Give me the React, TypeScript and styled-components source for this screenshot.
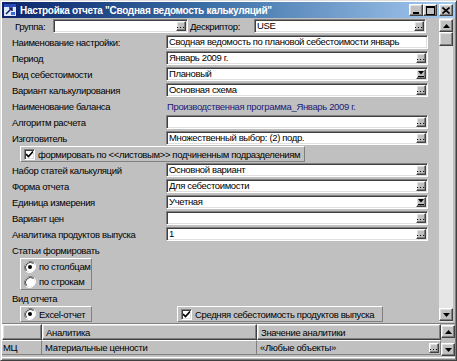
import React from "react";
import styled, { createGlobalStyle, css } from "styled-components";

const GlobalStyle = createGlobalStyle`
  html, body { margin: 0; padding: 0; background: #c0c0c0; }
  body { font-family: "Liberation Sans", Arial, sans-serif; font-size: 9.5px; letter-spacing: -0.35px; color: #000; }
  * { box-sizing: border-box; }
`;

const raised = css`
  border-top: 1px solid #ffffff;
  border-left: 1px solid #ffffff;
  border-right: 1px solid #404040;
  border-bottom: 1px solid #404040;
  box-shadow: inset -1px -1px 0 #808080, inset 1px 1px 0 #dfdfdf;
  background: #c0c0c0;
`;

const sunken = css`
  border-top: 1px solid #808080;
  border-left: 1px solid #808080;
  border-right: 1px solid #ffffff;
  border-bottom: 1px solid #ffffff;
  box-shadow: inset 1px 1px 0 #404040, inset -1px -1px 0 #dfdfdf;
`;

const Window = styled.div`
  width: 457px;
  height: 361px;
  background: #c0c0c0;
  border-top: 1px solid #dfdfdf;
  border-left: 1px solid #dfdfdf;
  border-right: 1px solid #404040;
  border-bottom: 1px solid #404040;
  box-shadow: inset 1px 1px 0 #ffffff, inset -1px -1px 0 #808080;
  padding: 1px;
  display: flex;
  flex-direction: column;
  overflow: hidden;
`;

const TitleBar = styled.div`
  height: 16px;
  flex: none;
  display: flex;
  align-items: center;
  padding-left: 1px;
  padding-right: 2px;
  background: linear-gradient(to right, #0a246a 0%, #3a6ea5 45%, #a6caf0 100%);
`;

const TitleText = styled.span`
  color: #ffffff;
  font-weight: bold;
  font-size: 10px;
  letter-spacing: -0.3px;
  margin-left: 3px;
  white-space: nowrap;
  flex: 1;
`;

const CaptionButton = styled.div<{ $gap?: number }>`
  ${raised};
  width: 14px;
  height: 12px;
  margin-left: ${(p) => p.$gap ?? 0}px;
  display: flex;
  align-items: center;
  justify-content: center;
`;

const Main = styled.div`
  height: 304px;
  flex: none;
  display: flex;
`;

const Content = styled.div`
  width: 437px;
  display: flex;
  flex-direction: column;
`;

const Row = styled.div<{ $indent?: number }>`
  height: 16px;
  flex: none;
  display: flex;
  align-items: center;
  padding-left: ${(p) => p.$indent ?? 10}px;
  white-space: nowrap;
`;

const Label = styled.span<{ $w: number }>`
  width: ${(p) => p.$w}px;
  flex: none;
  overflow: hidden;
`;

const Field = styled.div<{ $w: number }>`
  ${sunken};
  width: ${(p) => p.$w}px;
  height: 14px;
  flex: none;
  background: #ffffff;
  display: flex;
  align-items: center;
  padding-left: 2px;
  padding-right: 1px;
  overflow: hidden;
`;

const FieldText = styled.span`
  flex: 1;
  overflow: hidden;
  white-space: nowrap;
  line-height: 12px;
`;

const SmallButton = styled.div`
  ${raised};
  width: 10px;
  height: 10px;
  flex: none;
  display: flex;
  align-items: flex-end;
  justify-content: center;
`;

const BlueText = styled.span`
  color: #1c1c78;
  padding-left: 1px;
`;

const Frame = styled.div<{ $w: number; $h?: number; $ml?: number }>`
  width: ${(p) => p.$w}px;
  height: ${(p) => p.$h ?? 16}px;
  margin-left: ${(p) => p.$ml ?? 0}px;
  flex: none;
  border-top: 1px solid #ffffff;
  border-left: 1px solid #ffffff;
  border-right: 1px solid #808080;
  border-bottom: 1px solid #808080;
  display: flex;
  flex-direction: column;
  justify-content: center;
`;

const FrameGroup = styled(Row)`
  height: 32px;
  align-items: stretch;
`;

const Option = styled.div`
  height: 15px;
  display: flex;
  align-items: center;
  padding-left: 3px;
  white-space: nowrap;
`;

const OptionText = styled.span`
  margin-left: 3px;
`;

const CheckBox = styled.div`
  ${sunken};
  width: 11px;
  height: 11px;
  background: #ffffff;
  flex: none;
  display: flex;
  align-items: center;
  justify-content: center;
`;

const ScrollBar = styled.div`
  width: 14px;
  padding-top: 1px;
  padding-bottom: 1px;
  display: flex;
  flex-direction: column;
  background: #e6e6e6;
`;

const ScrollArrow = styled.div`
  ${raised};
  width: 14px;
  height: 13px;
  flex: none;
  display: flex;
  align-items: center;
  justify-content: center;
`;

const Thumb = styled.div`
  ${raised};
  width: 14px;
  height: 14px;
  flex: none;
`;

const Track = styled.div`
  flex: 1;
`;

const Grid = styled.div`
  margin-top: 1px;
  height: 35px;
  flex: none;
  display: flex;
  border-top: 1px solid #808080;
  border-bottom: 1px solid #ffffff;
`;

const GridBody = styled.div`
  width: 439px;
  display: flex;
  flex-direction: column;
`;

const GridRow = styled.div<{ $h: number }>`
  height: ${(p) => p.$h}px;
  display: flex;
`;

const HeadCell = styled.div<{ $w: number }>`
  ${raised};
  width: ${(p) => p.$w}px;
  height: 100%;
  flex: none;
  display: flex;
  align-items: center;
  padding-left: 3px;
  white-space: nowrap;
`;

const Cell = styled.div<{ $w: number; $pad?: number }>`
  width: ${(p) => p.$w}px;
  height: 100%;
  flex: none;
  display: flex;
  align-items: center;
  padding-left: ${(p) => p.$pad ?? 3}px;
  padding-right: 1px;
  white-space: nowrap;
  border-top: 1px solid #ffffff;
  border-right: 1px solid #808080;
  border-bottom: 1px solid #808080;
  background: #c0c0c0;
`;

const CellText = styled.span`
  flex: 1;
`;

const GridScroll = styled.div`
  width: 14px;
  display: flex;
  flex-direction: column;
  justify-content: space-between;
  padding: 1px 0;
`;

const Dots = () => (
  <svg width="8" height="4" viewBox="0 0 8 4">
    <rect x="0" y="1" width="1" height="1" fill="#000" />
    <rect x="3" y="1" width="1" height="1" fill="#000" />
    <rect x="6" y="1" width="1" height="1" fill="#000" />
  </svg>
);

const DropGlyph = () => (
  <svg width="8" height="8" viewBox="0 0 8 8">
    <path d="M1 1h6L4 4.5z" fill="#000" />
    <rect x="1" y="6" width="6" height="1" fill="#000" />
  </svg>
);

const Ellipsis = () => (
  <SmallButton>
    <Dots />
  </SmallButton>
);

const Drop = () => (
  <SmallButton style={{ alignItems: "center" }}>
    <DropGlyph />
  </SmallButton>
);

const Arrow = ({ up }: { up?: boolean }) => (
  <ScrollArrow>
    <svg width="7" height="4" viewBox="0 0 7 4">
      {up ? <path d="M3.5 0L7 4H0z" fill="#000" /> : <path d="M0 0h7L3.5 4z" fill="#000" />}
    </svg>
  </ScrollArrow>
);

const Check = () => (
  <CheckBox>
    <svg width="7" height="7" viewBox="0 0 7 7">
      <path d="M0 3l2.5 2.5L7 0.5" stroke="#000" strokeWidth="1.6" fill="none" />
    </svg>
  </CheckBox>
);

const Radio = ({ checked }: { checked?: boolean }) => (
  <svg width="12" height="12" viewBox="0 0 12 12" style={{ flex: "none" }}>
    <path d="M10.2 1.8A6 6 0 0 0 1.8 10.2" stroke="#808080" strokeWidth="1" fill="none" />
    <circle cx="6" cy="6" r="5" fill="#ffffff" />
    <path d="M9.5 2.5A5 5 0 0 0 2.5 9.5" stroke="#404040" strokeWidth="1" fill="none" />
    <path d="M1.8 10.2A6 6 0 0 0 10.2 1.8" stroke="#ffffff" strokeWidth="1" fill="none" />
    {checked && <circle cx="6" cy="6" r="2" fill="#000" />}
  </svg>
);

const AppIcon = () => (
  <svg width="14" height="14" viewBox="0 0 14 14" style={{ flex: "none" }}>
    <rect x="0.5" y="0.5" width="13" height="13" fill="#dfe8ff" stroke="#10206a" />
    <rect x="1" y="1" width="12" height="3" fill="#2a4cb8" />
    <path d="M3 11L9 5M6 5h3v3" stroke="#10206a" strokeWidth="1.5" fill="none" />
    <rect x="8" y="9" width="4" height="3" fill="#3a6ee0" />
  </svg>
);

type FieldRow = { label: string; value?: string; kind?: "dots" | "drop" | "none" | "blue" };

const rows: FieldRow[] = [
  { label: "Период", value: "Январь 2009 г.", kind: "dots" },
  { label: "Вид себестоимости", value: "Плановый", kind: "drop" },
  { label: "Вариант калькулирования", value: "Основная схема", kind: "dots" },
  { label: "Наименование баланса", value: "Производственная программа_Январь 2009 г.", kind: "blue" },
  { label: "Алгоритм расчета", value: "", kind: "dots" },
  { label: "Изготовитель", value: "Множественный выбор: (2) подр.", kind: "dots" },
];

const rows2: FieldRow[] = [
  { label: "Набор статей калькуляций", value: "Основной вариант", kind: "dots" },
  { label: "Форма отчета", value: "Для себестоимости", kind: "dots" },
  { label: "Единица измерения", value: "Учетная", kind: "drop" },
  { label: "Вариант цен", value: "", kind: "dots" },
  { label: "Аналитика продуктов  выпуска", value: "1", kind: "dots" },
];

const renderRow = (r: FieldRow) => (
  <Row key={r.label}>
    <Label $w={154}>{r.label}</Label>
    {r.kind === "blue" ? (
      <BlueText>{r.value}</BlueText>
    ) : (
      <Field $w={262}>
        <FieldText>{r.value}</FieldText>
        {r.kind === "dots" && <Ellipsis />}
        {r.kind === "drop" && <Drop />}
      </Field>
    )}
  </Row>
);

export default function App() {
  return (
    <>
      <GlobalStyle />
      <Window>
        <TitleBar>
          <AppIcon />
          <TitleText>Настройка отчета "Сводная ведомость калькуляций"</TitleText>
          <CaptionButton>
            <svg width="8" height="8" viewBox="0 0 8 8">
              <rect x="1" y="6" width="6" height="2" fill="#000" />
            </svg>
          </CaptionButton>
          <CaptionButton>
            <svg width="9" height="9" viewBox="0 0 9 9">
              <rect x="0.5" y="0.5" width="8" height="8" fill="none" stroke="#000" />
              <rect x="0" y="0" width="9" height="2" fill="#000" />
            </svg>
          </CaptionButton>
          <CaptionButton $gap={2}>
            <svg width="8" height="7" viewBox="0 0 8 7">
              <path d="M0.5 0.5L7.5 6.5M7.5 0.5L0.5 6.5" stroke="#000" strokeWidth="1.6" />
            </svg>
          </CaptionButton>
        </TitleBar>
        <Main>
          <Content>
            <Row $indent={13}>
              <Label $w={38}>Группа:</Label>
              <Field $w={135}>
                <FieldText />
                <Ellipsis />
              </Field>
              <Label $w={66} style={{ paddingLeft: 2 }}>Дескриптор:</Label>
              <Field $w={172}>
                <FieldText>USE</FieldText>
                <Ellipsis />
              </Field>
            </Row>
            <Row>
              <Label $w={154}>Наименование настройки:</Label>
              <Field $w={262}>
                <FieldText>Сводная ведомость по плановой себестоимости январь</FieldText>
              </Field>
            </Row>
            {rows.map(renderRow)}
            <Row $indent={18}>
              <Frame $w={285}>
                <Option>
                  <Check />
                  <OptionText>формировать по &lt;&lt;листовым&gt;&gt; подчиненным подразделениям</OptionText>
                </Option>
              </Frame>
            </Row>
            {rows2.map(renderRow)}
            <Row>Статьи формировать</Row>
            <FrameGroup $indent={18}>
              <Frame $w={72} $h={32}>
                <Option>
                  <Radio checked />
                  <OptionText>по столбцам</OptionText>
                </Option>
                <Option>
                  <Radio />
                  <OptionText>по строкам</OptionText>
                </Option>
              </Frame>
            </FrameGroup>
            <Row>Вид отчета</Row>
            <Row $indent={18}>
              <Frame $w={72}>
                <Option>
                  <Radio checked />
                  <OptionText>Excel-отчет</OptionText>
                </Option>
              </Frame>
              <Frame $w={206} $ml={85}>
                <Option>
                  <Check />
                  <OptionText>Средняя себестоимость продуктов  выпуска</OptionText>
                </Option>
              </Frame>
            </Row>
          </Content>
          <ScrollBar>
            <Arrow up />
            <Thumb />
            <Track />
            <Arrow />
          </ScrollBar>
        </Main>
        <Grid>
          <GridBody>
            <GridRow $h={16}>
              <HeadCell $w={40} />
              <HeadCell $w={215}>Аналитика</HeadCell>
              <HeadCell $w={184}>Значение аналитики</HeadCell>
            </GridRow>
            <GridRow $h={15}>
              <Cell $w={40} $pad={1}>МЦ</Cell>
              <Cell $w={215}>Материальные ценности</Cell>
              <Cell $w={184}>
                <CellText>«Любые объекты»</CellText>
                <Ellipsis />
              </Cell>
            </GridRow>
          </GridBody>
          <GridScroll>
            <Arrow up />
            <Arrow />
          </GridScroll>
        </Grid>
      </Window>
    </>
  );
}
